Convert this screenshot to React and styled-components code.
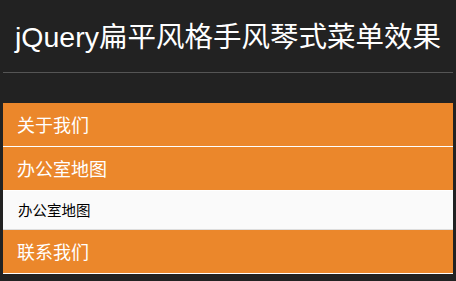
import styled, { createGlobalStyle } from 'styled-components'

const GlobalStyle = createGlobalStyle`
  html, body {
    margin: 0;
    padding: 0;
    background: #222222;
  }
  body {
    font-family: "Noto Sans CJK SC", "Noto Sans", sans-serif;
  }
`

const menu = [
    { title: '关于我们' },
    { title: '办公室地图', children: ['办公室地图'] },
    { title: '联系我们' },
]

const App = () => {
    return (<Page>
        <GlobalStyle />
        <Title>jQuery扁平风格手风琴式菜单效果</Title>
        <Rule />
        <Menu>
            {menu.map(item => (
                <li key={item.title}>
                    <Head>{item.title}</Head>
                    {item.children && (
                        <Sub>
                            {item.children.map(c => <SubItem key={c}>{c}</SubItem>)}
                        </Sub>
                    )}
                </li>
            ))}
        </Menu>
    </Page>)
}

const Page = styled.div`
  padding: 18px 3px 0;
`

const Title = styled.h1`
  margin: 0;
  font-family: "Liberation Sans", "Noto Sans CJK SC", sans-serif;
  font-size: 28.5px;
  font-weight: normal;
  line-height: 39px;
  color: #ffffff;
  text-align: center;
  white-space: nowrap;
`

const Rule = styled.hr`
  margin: 15px 0 0;
  border: 0;
  border-top: 1px solid #555555;
`

const Menu = styled.ul`
  list-style: none;
  margin: 30px 0 0;
  padding: 0;
`

const Head = styled.div`
  height: 43px;
  line-height: 43px;
  padding-left: 14px;
  font-size: 18px;
  color: #ffffff;
  background: #eb872b;
  border-bottom: 1px solid #ffffff;
`

const Sub = styled.ul`
  list-style: none;
  margin: 0;
  padding: 0;
`

const SubItem = styled.li`
  height: 38px;
  line-height: 38px;
  padding-left: 15px;
  font-size: 14.5px;
  color: #000000;
  background: #fafafa;
  border-bottom: 1px solid #dddddd;
`

export default App
